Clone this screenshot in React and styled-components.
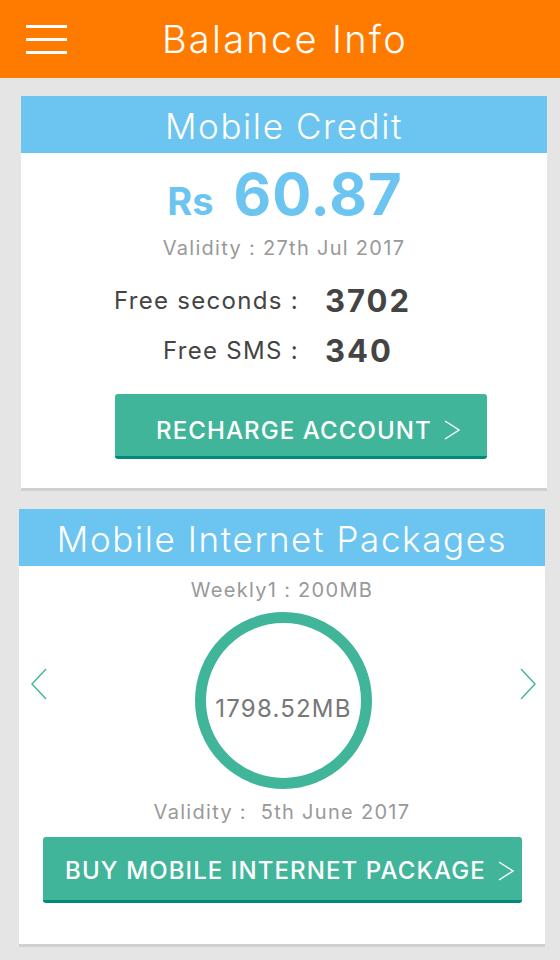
import styled, { createGlobalStyle } from 'styled-components';

const GlobalStyle = createGlobalStyle`
  * {
    box-sizing: border-box;
  }
  body {
    margin: 0;
    background: #e5e5e5;
    font-family: Inter, "Open Sans", sans-serif;
  }
`;

const Page = styled.div`
  width: 560px;
  min-height: 960px;
  background: #e5e5e5;
`;

const Header = styled.header`
  height: 78px;
  background: #ff7b00;
  display: grid;
  grid-template-columns: 1fr auto 1fr;
  align-items: center;
  padding: 0 16px 0 26px;
`;

const Burger = styled.div`
  width: 41px;
  height: 29px;
  display: flex;
  flex-direction: column;
  justify-content: space-between;
  span {
    display: block;
    height: 3px;
    background: #fff;
  }
`;

const Title = styled.h1`
  margin: 0;
  font-size: 38px;
  font-weight: 300;
  letter-spacing: 2.3px;
  color: #fff;
  line-height: 1;
`;

const Body = styled.main`
  padding: 18px 13px 0 21px;
  display: flex;
  flex-direction: column;
  gap: 18px;
`;

const Card = styled.section`
  background: #fff;
  border-bottom: 3px solid #d0d0d0;
  margin-left: ${(p) => p.$shift || 0}px;
  margin-right: ${(p) => -(p.$shift || 0)}px;
  padding-bottom: ${(p) => p.$bottom}px;
`;

const CardHead = styled.h2`
  margin: 0;
  height: 57px;
  padding-top: 3px;
  background: #6bc5f0;
  color: #fff;
  font-size: 35px;
  font-weight: 300;
  letter-spacing: 1.6px;
  text-align: center;
  line-height: 54px;
`;

const Amount = styled.div`
  margin-top: 9px;
  height: 64px;
  display: flex;
  justify-content: center;
  align-items: baseline;
  gap: 20px;
  color: #6bc5f0;
  font-weight: 700;
  line-height: 64px;
  padding-left: 2px;
`;

const Currency = styled.span`
  font-size: 38px;
`;

const Value = styled.span`
  font-size: 58px;
  letter-spacing: 1px;
`;

const Note = styled.p`
  margin: ${(p) => p.$top}px 0 0;
  font-size: 20px;
  line-height: 24px;
  letter-spacing: 1.3px;
  color: #999;
  text-align: center;
  white-space: pre;
`;

const Stats = styled.div`
  margin-top: 16px;
  display: grid;
  grid-template-columns: 278px auto;
  column-gap: 26px;
  line-height: 50px;
`;

const StatLabel = styled.span`
  font-size: 24px;
  letter-spacing: 1.3px;
  color: #444;
  text-align: right;
`;

const StatValue = styled.span`
  font-size: 31px;
  font-weight: 700;
  letter-spacing: 2px;
  color: #444;
`;

const ActionButton = styled.button`
  display: flex;
  align-items: center;
  justify-content: center;
  gap: 12px;
  height: ${(p) => p.$height}px;
  width: ${(p) => p.$width}px;
  margin: ${(p) => p.$top}px 0 0 ${(p) => p.$left}px;
  padding: ${(p) => p.$pt}px 0 0 ${(p) => p.$pad}px;
  border: none;
  border-bottom: 3px solid #008a7a;
  border-radius: 3px;
  background: #41b59a;
  color: #fff;
  font-family: inherit;
  font-size: 24px;
  font-weight: 500;
  letter-spacing: 1.1px;
  cursor: pointer;
`;

const Carousel = styled.div`
  margin-top: 10px;
  display: flex;
  justify-content: space-between;
  padding: 0 9px 0 12px;
`;

const Arrow = styled.button`
  align-self: flex-start;
  margin-top: 56px;
  padding: 0;
  border: none;
  background: none;
  width: 16px;
  height: 32px;
  cursor: pointer;
`;

const Ring = styled.div`
  width: 177px;
  height: 177px;
  border-radius: 50%;
  border: 11px solid #41b59a;
  display: flex;
  align-items: center;
  justify-content: center;
  padding-top: 16px;
  font-size: 24px;
  letter-spacing: 1.2px;
  color: #777;
`;

const Chevron = ({ dir = 'right', color = '#fff', w = 16, h = 20 }) => (
  <svg width={w} height={h} viewBox={`0 0 ${w} ${h}`} fill="none">
    <polyline
      points={
        dir === 'right'
          ? `1,1 ${w - 1},${h / 2} 1,${h - 1}`
          : `${w - 1},1 1,${h / 2} ${w - 1},${h - 1}`
      }
      stroke={color}
      strokeWidth="1.4"
    />
  </svg>
);

export default function App() {
  return (
    <Page>
      <GlobalStyle />
      <Header>
        <Burger>
          <span />
          <span />
          <span />
        </Burger>
        <Title>Balance Info</Title>
        <div />
      </Header>
      <Body>
        <Card $bottom={29}>
          <CardHead>Mobile Credit</CardHead>
          <Amount>
            <Currency>Rs</Currency>
            <Value>60.87</Value>
          </Amount>
          <Note $top={10}>Validity : 27th Jul 2017</Note>
          <Stats>
            <StatLabel>Free seconds :</StatLabel>
            <StatValue>3702</StatValue>
            <StatLabel>Free SMS :</StatLabel>
            <StatValue>340</StatValue>
          </Stats>
          <ActionButton type="button" $height={65} $width={372} $top={18} $left={94} $pad={14} $pt={10}>
            RECHARGE ACCOUNT
            <Chevron />
          </ActionButton>
        </Card>
        <Card $bottom={41} $shift={-2}>
          <CardHead>Mobile Internet Packages</CardHead>
          <Note $top={12}>Weekly1 : 200MB</Note>
          <Carousel>
            <Arrow type="button" aria-label="previous">
              <Chevron dir="left" color="#41b59a" w={16} h={32} />
            </Arrow>
            <Ring>1798.52MB</Ring>
            <Arrow type="button" aria-label="next">
              <Chevron color="#41b59a" w={16} h={32} />
            </Arrow>
          </Carousel>
          <Note $top={11}>{'Validity :  5th June 2017'}</Note>
          <ActionButton type="button" $height={66} $width={479} $top={13} $left={24} $pad={14} $pt={4}>
            BUY MOBILE INTERNET PACKAGE
            <Chevron />
          </ActionButton>
        </Card>
      </Body>
    </Page>
  );
}
